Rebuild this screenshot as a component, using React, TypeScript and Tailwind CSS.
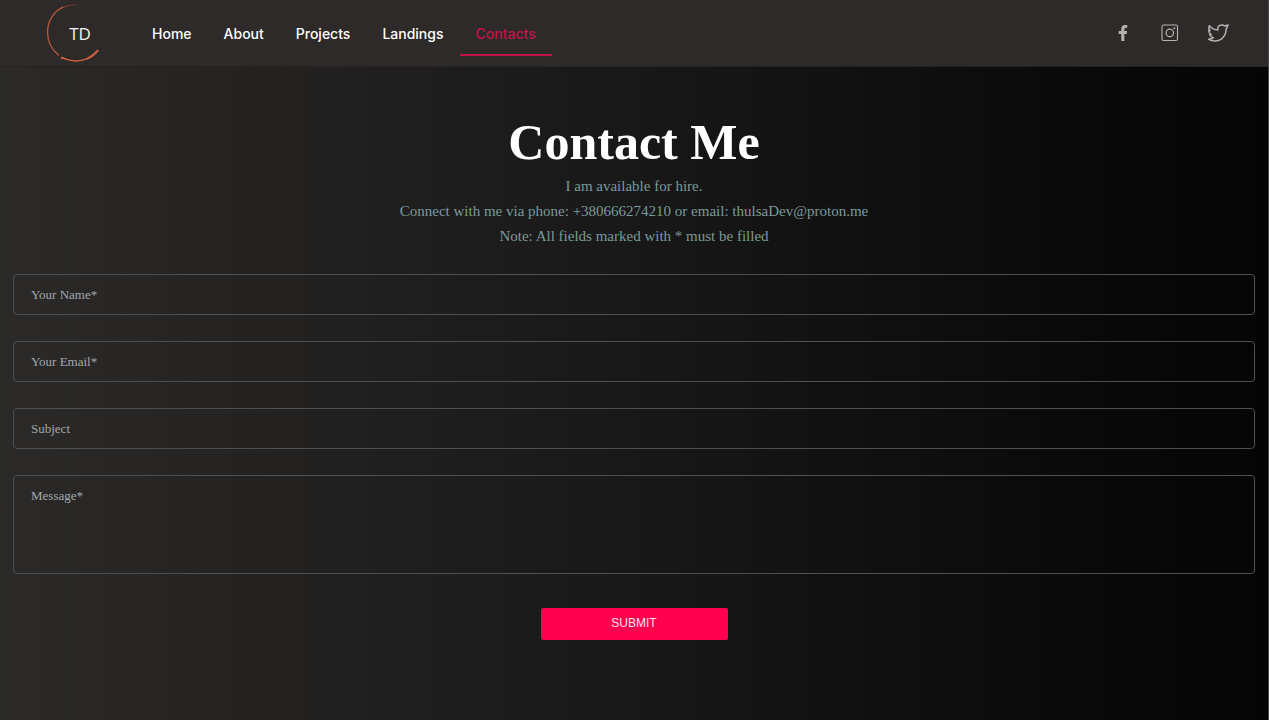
import { FaFacebookF } from "react-icons/fa";

const links = ["Home", "About", "Projects", "Landings", "Contacts"];

const fieldClass =
  "block w-full rounded border border-[#504f4f] bg-transparent px-[17px] py-0 text-[13px] leading-4 text-white placeholder:text-[#a3a7ae] outline-none focus:border-[#ff004f]";

function Logo() {
  return (
    <a href="#home" aria-label="TD" className="block h-[66px] w-16">
      <svg viewBox="0 0 64 66" className="h-full w-full" fill="none">
        <path d="M44 5.2 C39 3.8 32 4.3 26.5 7 L27 8 C32 5.5 38 4.6 44 5.2Z" fill="#8a4630" />
        <path d="M27 7.2 C18 11 11.6 21 11.5 32 C11.5 42 16 50 23 55.4" stroke="#b9583a" strokeWidth="1.3" />
        <path d="M26 57.4 C32 61.2 43 62.6 51 58.6 C55.6 56.4 59 53.6 62 50" stroke="#d4603f" strokeWidth="1.4" />
        <path d="M51 59.2 C56 57 60 53.6 62.4 50.4" stroke="#d4603f" strokeWidth="1.2" />
        <circle cx="26" cy="58" r="1.2" fill="#d4603f" />
        <text x="44" y="40" textAnchor="middle" className="fill-[#f3f3f3] font-['Open_Sans',sans-serif] text-[17px]">
          TD
        </text>
      </svg>
    </a>
  );
}

function InstagramIcon() {
  return (
    <svg viewBox="0 0 18 18" className="size-[18px]" fill="none" stroke="currentColor">
      <rect x="1" y="1" width="15.5" height="15.5" rx="1.6" strokeWidth="1.1" />
      <circle cx="8.8" cy="8.9" r="3.7" strokeWidth="1.2" />
      <circle cx="13.4" cy="4.2" r="1" fill="currentColor" stroke="none" />
    </svg>
  );
}

function TwitterIcon() {
  return (
    <svg
      viewBox="0 0 22 20"
      className="h-5 w-[22px]"
      fill="none"
      stroke="currentColor"
      strokeWidth="1.5"
      strokeLinejoin="round"
    >
      <path d="M2.4 2.6 C4.6 5.4 7.4 6.9 10.8 7 C10.2 4 12 1.9 14.6 1.9 C15.9 1.9 16.9 2.4 17.6 3 L21 2 C20.8 3.4 20.2 4.7 19.2 5.7 C19.2 12.8 14.2 18 8 18 C5.4 18 3.2 17.4 1.5 16.2 C3.6 16.2 5.2 15.7 6.5 14.7 C4.5 14.3 3.3 13.3 2.7 11.7 L4.2 11.5 C2.5 10.6 1.7 9.3 1.6 7.5 L2.9 7.8 C1.7 6.3 1.6 4.4 2.4 2.6Z" />
    </svg>
  );
}

function Header() {
  return (
    <header className="flex h-[67px] items-center justify-between border-b border-[#252322] bg-[#2d2a29] pr-[39px] pl-9">
      <div className="flex items-center gap-9">
        <Logo />
        <nav className="flex font-['Inter',sans-serif] text-sm font-medium">
          {links.map((link) => (
            <a
              key={link}
              href={`#${link.toLowerCase()}`}
              aria-current={link === "Contacts" ? "page" : undefined}
              className={
                link === "Contacts"
                  ? "border-b-2 border-[#c4124a] px-4 pt-[13px] pb-[10px] leading-5 text-[#c4124a]"
                  : "border-b-2 border-transparent px-4 pt-[13px] pb-[10px] leading-5 text-white"
              }
            >
              {link}
            </a>
          ))}
        </nav>
      </div>
      <div className="flex items-center gap-[27px] text-[#b5b3b2]">
        <a href="#facebook" aria-label="Facebook" className="flex w-5 justify-center">
          <FaFacebookF className="size-4" />
        </a>
        <a href="#instagram" aria-label="Instagram" className="flex w-5 justify-center">
          <InstagramIcon />
        </a>
        <a href="#twitter" aria-label="Twitter" className="flex justify-center">
          <TwitterIcon />
        </a>
      </div>
    </header>
  );
}

export default function App() {
  return (
    <div className="min-h-screen border-r border-[#484848] bg-linear-to-r from-[#2b2a28] via-[#191818] to-[#050505] font-['Liberation_Serif',serif]">
      <Header />
      <main className="px-[13px] pt-[46px] pb-20">
        <div className="text-center">
          <h1 className="text-[50px] leading-[58px] font-bold text-white">Contact Me</h1>
          <div className="mt-[3px] text-[15px] leading-[25px] text-[#7b9a9b]">
            <p>I am available for hire.</p>
            <p>Connect with me via phone: +380666274210 or email: thulsaDev@proton.me</p>
            <p>Note: All fields marked with * must be filled</p>
          </div>
        </div>
        <form className="mt-[25px] flex flex-col items-center gap-[26px]" onSubmit={(e) => e.preventDefault()}>
          <input type="text" aria-label="Your Name" placeholder="Your Name*" className={`${fieldClass} h-[41px]`} />
          <input type="email" aria-label="Your Email" placeholder="Your Email*" className={`${fieldClass} h-[41px]`} />
          <input type="text" aria-label="Subject" placeholder="Subject" className={`${fieldClass} h-[41px]`} />
          <textarea aria-label="Message" placeholder="Message*" className={`${fieldClass} h-[99px] resize-none pt-3`} />
          <button
            type="submit"
            className="mt-2 h-8 w-[187px] rounded-xs bg-[#ff0050] pb-0.5 font-['Liberation_Sans',sans-serif] text-xs leading-4 text-[#ffe3ec]"
          >
            SUBMIT
          </button>
        </form>
      </main>
    </div>
  );
}
